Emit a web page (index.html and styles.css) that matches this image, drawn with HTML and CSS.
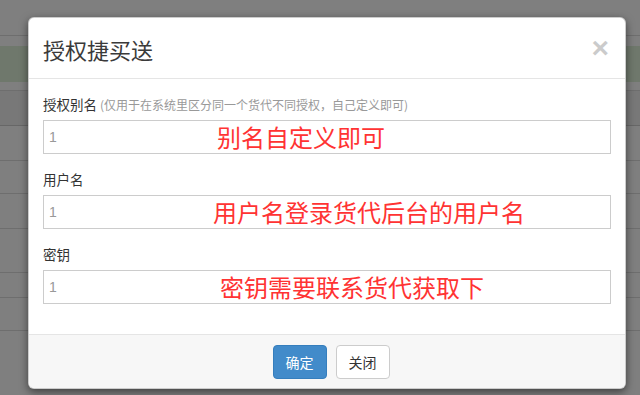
FILE: index.html
```html
<!DOCTYPE html>
<html lang="zh-CN">
<head>
<meta charset="utf-8">
<title>授权捷买送</title>
<link rel="stylesheet" href="styles.css">
</head>
<body>
<div class="page">
  <div class="row r-top"></div>
  <div class="row r-gap"></div>
  <div class="row r-success"></div>
  <div class="row r-thin"></div>
  <div class="row r-head"></div>
  <div class="row r-35"></div>
  <div class="row r-33"></div>
  <div class="row r-35"></div>
  <div class="row r-44"></div>
  <div class="row r-25"></div>
  <div class="row r-33"></div>
  <div class="row r-last"><span class="bg-btn"></span></div>
</div>
<div class="backdrop"></div>
<div class="modal">
  <div class="modal-header">
    <h4 class="modal-title">授权捷买送</h4>
    <span class="close">×</span>
  </div>
  <div class="modal-body">
    <div class="form-group">
      <label class="label">授权别名 <small class="hint">(仅用于在系统里区分同一个货代不同授权，自己定义即可)</small></label>
      <div class="input-wrap">
        <div class="input">1</div>
        <span class="note n1">别名自定义即可</span>
      </div>
    </div>
    <div class="form-group">
      <label class="label">用户名</label>
      <div class="input-wrap">
        <div class="input">1</div>
        <span class="note n2">用户名登录货代后台的用户名</span>
      </div>
    </div>
    <div class="form-group">
      <label class="label">密钥</label>
      <div class="input-wrap">
        <div class="input">1</div>
        <span class="note n3">密钥需要联系货代获取下</span>
      </div>
    </div>
  </div>
  <div class="modal-footer">
    <button class="btn btn-primary">确定</button>
    <button class="btn btn-default">关闭</button>
  </div>
</div>
</body>
</html>
```
FILE: styles.css
```css
* { box-sizing: border-box; }
html, body { margin: 0; padding: 0; }
body {
  width: 640px;
  height: 395px;
  overflow: hidden;
  font-family: "Noto Sans CJK SC", "Noto Sans", sans-serif;
  background: #fff;
  position: relative;
}
.page { display: flex; flex-direction: column; }
.row { border-bottom: 1px solid #dcdcdc; }
.r-top { height: 36px; }
.r-gap { height: 10px; border-bottom: none; }
.r-success { height: 36px; background: #dff0d8; border-bottom: none; }
.r-thin { height: 9px; }
.r-head { height: 35px; background: #f0f0f0; border-bottom-color: #cfcfcf; }
.r-35 { height: 35px; }
.r-33 { height: 33px; }
.r-44 { height: 44px; }
.r-25 { height: 25px; }
.r-last { height: 40px; border-bottom: none; padding-left: 276px; padding-top: 22px; }
.bg-btn {
  display: block;
  width: 76px;
  height: 18px;
  background: #6a6a6a;
  border-radius: 4px;
}
.backdrop {
  position: absolute;
  inset: 0;
  background: rgba(0, 0, 0, 0.5);
}
.modal {
  position: absolute;
  left: 28px;
  top: 17px;
  width: 598px;
  background: #fff;
  border-radius: 6px;
  border: 1px solid rgba(0, 0, 0, 0.2);
  box-shadow: 0 3px 9px rgba(0, 0, 0, 0.5);
  overflow: hidden;
}
.modal-header {
  display: flex;
  align-items: center;
  justify-content: space-between;
  height: 61px;
  padding: 0 15px 0 14px;
  border-bottom: 1px solid #e5e5e5;
}
.modal-title {
  margin: 0;
  font-size: 22px;
  font-weight: normal;
  line-height: 30px;
  color: #3a3a3a;
  padding-top: 2px;
}
.close {
  font-family: "Liberation Sans", Arial, sans-serif;
  font-size: 30px;
  font-weight: bold;
  line-height: 30px;
  color: #000;
  opacity: 0.2;
  margin-right: 1px;
}
.modal-body { padding: 15px 14px 15px 14px; }
.form-group { margin-bottom: 15px; }
.label {
  display: block;
  height: 20px;
  font-size: 13.5px;
  line-height: 20px;
  color: #333;
  margin-bottom: 6px;
  white-space: nowrap;
}
.hint { font-size: 12px; color: #999; }
.input-wrap { position: relative; }
.input {
  height: 34px;
  border: 1px solid #ccc;
  padding: 0 5px;
  font-size: 14px;
  line-height: 32px;
  color: #999;
  font-family: "Liberation Sans", Arial, sans-serif;
}
.note {
  position: absolute;
  top: 0;
  line-height: 34px;
  font-size: 24px;
  color: #ff3333;
  white-space: nowrap;
}
.n1 { left: 174px; }
.n2 { left: 170px; }
.n3 { left: 177px; }
.modal-footer {
  padding: 10px 11px 9px 19px;
  text-align: center;
  background: #f7f7f7;
  border-top: 1px solid #e5e5e5;
  font-size: 0;
}
.btn {
  display: inline-block;
  height: 34px;
  padding: 0 12px;
  font-family: "Noto Sans CJK SC", sans-serif;
  font-size: 14px;
  line-height: 32px;
  border-radius: 4px;
  border: 1px solid transparent;
}
.btn-primary { background: #428bca; border-color: #357ebd; color: #fff; }
.btn-default { background: #fff; border-color: #ccc; color: #333; margin-left: 9px; }
```
